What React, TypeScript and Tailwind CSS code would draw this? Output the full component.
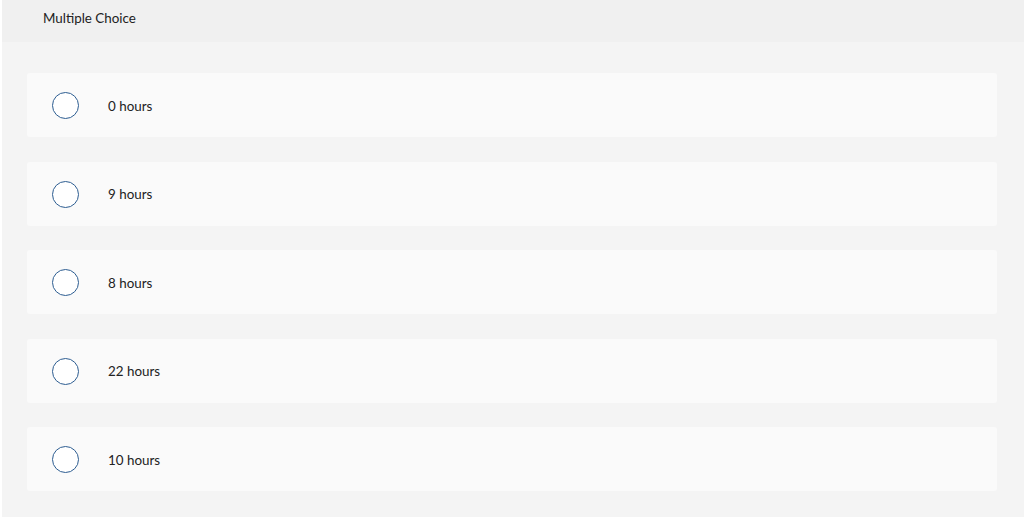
import React from "react";

const options = ["0 hours", "9 hours", "8 hours", "22 hours", "10 hours"];

export default function App() {
  return (
    <div
      className="w-[1024px] h-[519px] bg-white pl-[2px] pb-[2px] flex flex-col"
      style={{ fontFamily: "Lato, 'Open Sans', sans-serif" }}
    >
      <div className="h-[42px] bg-[#f0f0f0] flex items-center pl-[41px] shrink-0">
        <span className="text-[13.4px] text-[#222] pb-[6px]">Multiple Choice</span>
      </div>
      <div className="flex-1 bg-[#f4f4f4] pt-[31px] pl-[25px] pr-[27px] flex flex-col gap-[24.5px]">
        {options.map((o) => (
          <div
            key={o}
            className="h-[64px] bg-[#fafafa] rounded-[3px] flex items-center pl-[25px]"
          >
            <div className="w-[27px] h-[27px] mt-[1px] rounded-full border border-[#2d5d91] bg-white shrink-0" />
            <span className="ml-[29px] pt-[2px] text-[13.4px] text-[#222]">{o}</span>
          </div>
        ))}
      </div>
    </div>
  );
}
